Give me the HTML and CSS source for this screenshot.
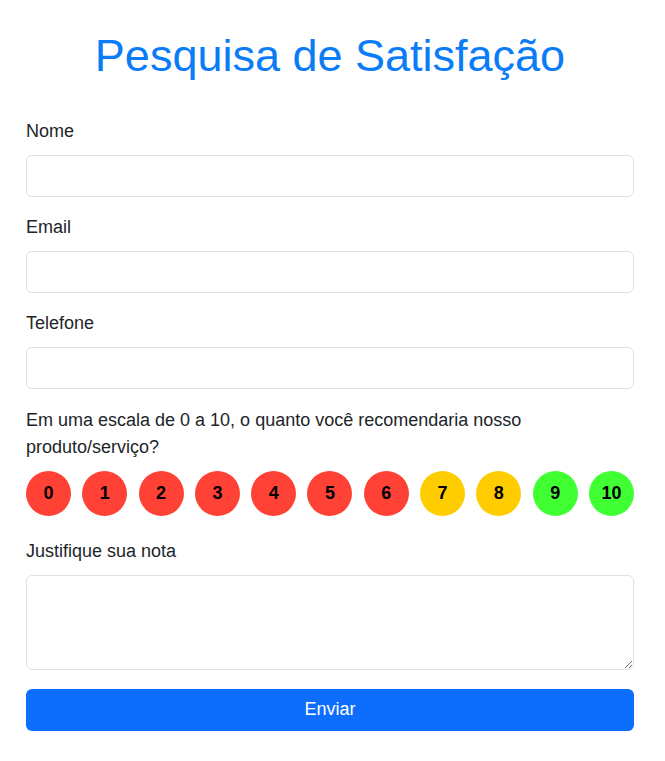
FILE: index.html
```html
<!DOCTYPE html>
<html lang="pt">
<head>
<meta charset="utf-8">
<title>Pesquisa de Satisfação</title>
<link rel="stylesheet" href="styles.css">
</head>
<body>
<main class="container">
  <h1 class="title">Pesquisa de Satisfação</h1>
  <form class="form">
    <div class="field">
      <label class="label" for="nome">Nome</label>
      <input class="input" id="nome" type="text">
    </div>
    <div class="field">
      <label class="label" for="email">Email</label>
      <input class="input" id="email" type="email">
    </div>
    <div class="field">
      <label class="label" for="tel">Telefone</label>
      <input class="input" id="tel" type="tel">
    </div>
    <div class="field">
      <p class="question">Em uma escala de 0 a 10, o quanto você recomendaria nosso produto/serviço?</p>
      <div class="scale">
        <span class="dot red">0</span>
        <span class="dot red">1</span>
        <span class="dot red">2</span>
        <span class="dot red">3</span>
        <span class="dot red">4</span>
        <span class="dot red">5</span>
        <span class="dot red">6</span>
        <span class="dot yellow">7</span>
        <span class="dot yellow">8</span>
        <span class="dot green">9</span>
        <span class="dot green">10</span>
      </div>
    </div>
    <div class="field">
      <label class="label" for="just">Justifique sua nota</label>
      <textarea class="textarea" id="just"></textarea>
    </div>
    <button class="submit" type="button">Enviar</button>
  </form>
</main>
</body>
</html>
```
FILE: styles.css
```css
* { box-sizing: border-box; }
html, body { margin: 0; background: #fff; }
body {
  font-family: "Liberation Sans", Arial, sans-serif;
  color: #212529;
  font-size: 16px;
  line-height: 1.5;
}
.container {
  width: 665px;
  padding: 26px 31px 30px 26px;
}
.title {
  margin: 0 0 33px;
  text-align: center;
  font-weight: 400;
  font-size: 45px;
  line-height: 60px;
  color: #0a7cf8;
}
.form { display: flex; flex-direction: column; }
.field { display: flex; flex-direction: column; margin-bottom: 18.5px; }
.label {
  display: block;
  margin-bottom: 10.5px;
  font-size: 18px;
  line-height: 25px;
}
.input, .textarea {
  width: 100%;
  height: 42px;
  border: 1px solid #dee2e6;
  border-radius: 6px;
  background: #fff;
  font: inherit;
}
.textarea { height: 95px; resize: vertical; }
.question {
  margin: 0 0 9.5px;
  font-size: 18px;
  line-height: 27px;
}
.scale {
  display: flex;
  justify-content: space-between;
  margin-bottom: 5px;
}
.dot {
  width: 45px;
  height: 45px;
  border-radius: 50%;
  display: flex;
  align-items: center;
  justify-content: center;
  font-weight: 700;
  font-size: 18px;
  color: #000;
}
.red { background: #ff4136; }
.yellow { background: #ffcc00; }
.green { background: #40ff33; }
.submit {
  height: 42px;
  margin-top: 0.5px;
  border: 0;
  border-radius: 6px;
  background: #0d6efd;
  color: #fff;
  font-family: inherit;
  font-size: 18px;
}
```
